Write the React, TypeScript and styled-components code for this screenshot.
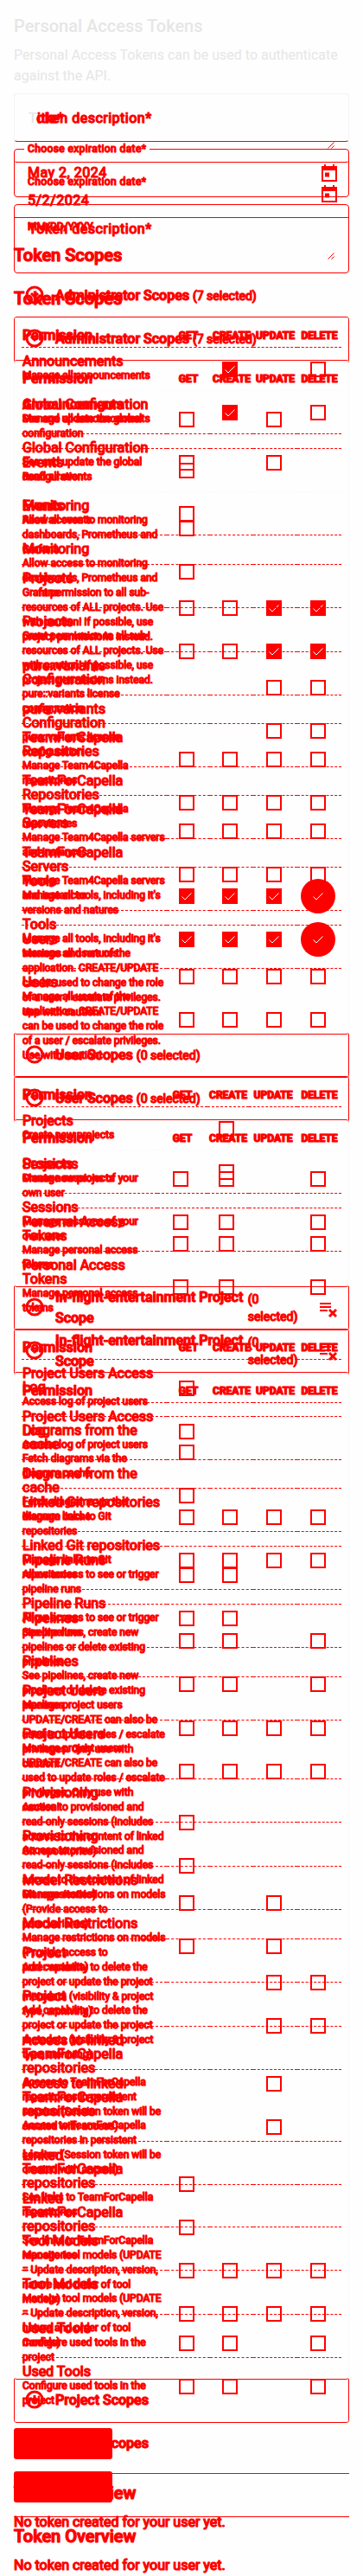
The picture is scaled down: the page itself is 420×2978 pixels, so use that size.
import React, { useId } from "react";
import styled, { createGlobalStyle } from "styled-components";

const RED = "#ff0000";
const FAINT = "#e6e6e6";
const PAPER = "#fefefe";

const GlobalStyle = createGlobalStyle`
  *, *::before, *::after { box-sizing: border-box; }
  body { margin: 0; background: ${PAPER}; font-family: Roboto, "Liberation Sans", sans-serif; }
  h1, h2, p { margin: 0; }
`;

type Version = "before" | "after";
type Method = "GET" | "CREATE" | "UPDATE" | "DELETE";

const METHODS: Method[] = ["GET", "CREATE", "UPDATE", "DELETE"];

interface Permission {
  title: string;
  text: string;
  same?: string;
  allow: Method[];
  checked?: Method[];
  hovered?: Method;
}

const ADMIN: Permission[] = [
  { title: "Announcements", text: "Manage all announcements", allow: ["CREATE", "DELETE"], checked: ["CREATE"] },
  { title: "Global Configuration", text: "See and update the global configuration", allow: ["GET", "UPDATE"] },
  { title: "Events", text: "Read all events", allow: ["GET"] },
  { title: "Monitoring", text: "Allow access to monitoring dashboards, Prometheus and Grafana", allow: ["GET"] },
  {
    title: "Projects",
    same: "Gra",
    text: "nt permission to all sub-resources of ALL projects. Use with caution! If possible, use project permissions instead.",
    allow: METHODS,
    checked: ["UPDATE", "DELETE"],
  },
  { title: "pure::variants Configuration", text: "pure::variants license configuration", allow: ["UPDATE", "DELETE"] },
  { title: "TeamForCapella Repositories", text: "Manage Team4Capella repositories", allow: METHODS },
  { title: "TeamForCapella Servers", text: "Manage Team4Capella servers and instances", allow: METHODS },
  {
    title: "Tools",
    text: "Manage all tools, including it's versions and natures",
    allow: METHODS,
    checked: METHODS,
    hovered: "DELETE",
  },
  {
    title: "Users",
    text: "Manage all users of the application. CREATE/UPDATE can be used to change the role of a user / escalate privileges. Use with caution!",
    allow: METHODS,
  },
];

const USER: Permission[] = [
  { title: "Projects", text: "Create new projects", allow: ["CREATE"] },
  { title: "Sessions", text: "Manage sessions of your own user", allow: ["GET", "CREATE", "DELETE"] },
  { title: "Personal Access Tokens", text: "Manage personal access tokens", allow: ["GET", "CREATE", "DELETE"] },
];

const PROJECT: Permission[] = [
  { title: "Project Users Access Log", text: "Access log of project users", allow: ["GET"] },
  { title: "Diagrams from the cache", text: "Fetch diagrams via the diagram cache", allow: ["GET"] },
  { title: "Linked Git repositories", text: "Manage links to Git\nrepositories", allow: METHODS },
  { title: "Pipeline Runs", text: "Allow access to see or trigger pipeline runs", allow: ["GET", "CREATE"] },
  {
    title: "Pipelines",
    text: "See pipelines, create new pipelines or delete existing pipelines",
    allow: ["GET", "CREATE", "DELETE"],
  },
  {
    title: "Project Users",
    text: "Manage project users UPDATE/CREATE can also be used to update roles / escalate privileges. Only use with\ncaution!",
    allow: METHODS,
  },
  {
    title: "Provisioning",
    text: "Access to provisioned and read-only sessions (includes access to the content of linked Git repositories)",
    allow: ["GET"],
  },
  {
    title: "Model Restrictions",
    text: "Manage restrictions on models (Provide access to pure::variants)",
    allow: ["GET", "UPDATE"],
  },
  {
    title: "Project",
    text: "Add capability to delete the project or update the project metadata (visibility & project type, archiving)",
    allow: ["UPDATE", "DELETE"],
  },
  {
    title: "Access to linked TeamForCapella repositories",
    text: "Access to TeamForCapella repositories in persistent session (Session token will be created with access)",
    allow: ["UPDATE"],
  },
  {
    title: "Linked\nTeamForCapella repositories",
    text: "See links to TeamForCapella repositories",
    allow: ["GET"],
  },
  {
    title: "Tool Models",
    text: "Manage tool models (UPDATE = Update description, version, nature and order of tool models)",
    allow: METHODS,
  },
  { title: "Used Tools", text: "Configure used tools in the project", allow: ["GET", "CREATE", "DELETE"] },
];

/* Both versions share one grid cell, so the later one lies over the earlier. */
const Comparison = styled.main`
  display: grid;
  grid-template-columns: minmax(0, 1fr);
  align-items: start;
  color: ${RED};
`;

const Layer = styled.div`
  grid-area: 1 / 1;
  padding: 16px 16px 0;
  -webkit-text-stroke: 1px currentColor;
  text-shadow: 0 0 1px currentColor, 0 0 1px currentColor;
`;

const Intro = styled.header<{ $hidden: boolean }>`
  display: flex;
  flex-direction: column;
  gap: 8px;
  margin-bottom: 8px;
  color: ${FAINT};
  -webkit-text-stroke: 0;
  text-shadow: none;
  visibility: ${(p) => (p.$hidden ? "hidden" : "visible")};
`;

const PageTitle = styled.h1`
  font-size: 20px;
  line-height: 28px;
  font-weight: 500;
`;

const Lead = styled.p`
  font-size: 16px;
  line-height: 24px;
`;

const Same = styled.span`
  color: ${FAINT};
  -webkit-text-stroke: 0;
  text-shadow: none;
`;

const Fields = styled.div<{ $after: boolean }>`
  display: flex;
  flex-direction: column;
  gap: 8px;
  padding-bottom: ${(p) => (p.$after ? 7 : 0)}px;
`;

const Field = styled.div<{ $side: string; $top: string; $height: number }>`
  position: relative;
  display: flex;
  align-items: center;
  height: ${(p) => p.$height}px;
  border: 1px solid ${(p) => p.$side};
  border-top-color: ${(p) => p.$top};
  border-bottom-color: ${RED};
  border-radius: 4px;
`;

const Underlined = styled.div`
  position: relative;
  display: flex;
  align-items: flex-end;
  height: 56px;
  padding: 0 1px 7px;
  border-bottom: 1px solid ${RED};
`;

const Control = styled.input`
  flex: 1;
  min-width: 0;
  height: 24px;
  padding: 0 15px;
  border: 0;
  outline: 0;
  background: transparent;
  color: ${RED};
  font: 400 16px/24px Roboto, sans-serif;
  letter-spacing: 0.5px;
  -webkit-text-stroke: 1px ${RED};
  text-shadow: 0 0 1px ${RED};
`;

const Area = styled(Control).attrs({ as: "textarea" })`
  align-self: stretch;
  height: auto;
  resize: none;
`;

const Label = styled.label`
  position: absolute;
  left: 16px;
  top: 16px;
  font-size: 16px;
  line-height: 24px;
  letter-spacing: 0.5px;
`;

const SmallLabel = styled.label<{ $outlined: boolean }>`
  position: absolute;
  left: ${(p) => (p.$outlined ? 11 : 12)}px;
  top: ${(p) => (p.$outlined ? -9 : 6)}px;
  padding: 0 4px;
  background: ${(p) => (p.$outlined ? PAPER : "transparent")};
  font-size: 12px;
  line-height: 16px;
  letter-spacing: 0.4px;
`;

const IconButton = styled.button<{ $inset: number }>`
  display: grid;
  flex: none;
  place-items: center;
  width: 24px;
  height: 24px;
  margin: 0 ${(p) => p.$inset}px 0 0;
  padding: 0;
  border: 0;
  background: none;
  color: ${RED};
`;

const DateDock = styled.div`
  display: flex;
  align-self: center;
  padding-top: 7px;
`;

const Hint = styled.p`
  margin-top: -8px;
  padding-left: 16px;
  font-size: 12px;
  line-height: 21px;
`;

const Grip = styled.svg`
  position: absolute;
  right: 16px;
  bottom: 15px;
`;

const Heading = styled.h2`
  margin: 8px 0;
  font-size: 20px;
  line-height: 28px;
  font-weight: 500;
`;

const ScopeHeading = styled(Heading)`
  margin-bottom: 9px;
`;

const PanelHeader = styled.div`
  display: flex;
  align-items: center;
  gap: 12px;
  min-height: 48px;
  padding: 0 11px 0 12px;
`;

const PanelIcon = styled.svg`
  flex: none;
  width: 24px;
  height: 24px;
`;

const PanelName = styled.div<{ $wide: boolean }>`
  display: flex;
  flex: 1;
  align-items: center;
  gap: ${(p) => (p.$wide ? 0 : 4)}px;
`;

const PanelTitle = styled.span<{ $wide: boolean }>`
  flex: none;
  width: ${(p) => (p.$wide ? "76%" : "auto")};
  font-size: 16px;
  line-height: 24px;
  font-weight: 500;
`;

const PanelCount = styled.span`
  font-size: 14px;
  line-height: 20px;
`;

/* Side rules show in red only over the 50px that the other version lacks. */
const Card = styled.section<{ $edge: "top" | "bottom" }>`
  padding: 8px 9px;
  border: solid ${RED};
  border-width: 1px 0;
  border-radius: 4px;
  background:
    linear-gradient(${RED}, ${RED}) left ${(p) => p.$edge} / 1px 50px no-repeat,
    linear-gradient(${RED}, ${RED}) right ${(p) => p.$edge} / 1px 50px no-repeat,
    linear-gradient(#fafafa, #fafafa) left top / 1px 100% no-repeat,
    linear-gradient(#fafafa, #fafafa) right top / 1px 100% no-repeat;
`;

const Table = styled.table`
  width: 100%;
  table-layout: fixed;
  border-collapse: separate;
  border-spacing: 0;
`;

const Column = styled.col<{ $width: number }>`
  width: ${(p) => p.$width}px;
`;

const Row = styled.tr<{ $faint: boolean }>`
  & > * { border-bottom: 1px dashed ${(p) => (p.$faint ? "#fafafa" : RED)}; }
  &:last-child > td { border-bottom: 0; }
`;

const HeadRow = styled.tr<{ $faint: boolean }>`
  & > * { border-bottom: 1px dashed ${(p) => (p.$faint ? "#fafafa" : RED)}; }
`;

const NameHead = styled.th`
  height: 27px;
  padding: 0 1px;
  font-size: 16px;
  line-height: 24px;
  font-weight: 500;
  text-align: left;
`;

const MethodHead = styled.th`
  padding: 0;
  font-size: 12px;
  line-height: 24px;
  font-weight: 700;
  text-align: center;
`;

const NameCell = styled.td`
  padding: 8px 1px;
`;

const PermissionTitle = styled.div`
  font-size: 16px;
  line-height: 16px;
  white-space: pre-line;
`;

const PermissionText = styled.div`
  font-size: 12px;
  line-height: 17px;
  white-space: pre-line;
`;

const TickCell = styled.td`
  padding: 0 4px 0 0;
  vertical-align: middle;
`;

const TickBox = styled.span<{ $hovered: boolean }>`
  display: grid;
  place-items: center;
  width: 40px;
  height: 40px;
  margin: 0 auto;
  border-radius: 50%;
  background: ${(p) => (p.$hovered ? RED : "transparent")};
`;

const Tick = styled.input.attrs({ type: "checkbox" })`
  grid-area: 1 / 1;
  appearance: none;
  width: 18px;
  height: 18px;
  margin: 0;
  border: 2px solid ${RED};
  &:checked { background: ${RED}; }
`;

const TickMark = styled.svg`
  grid-area: 1 / 1;
  pointer-events: none;
`;

const Submit = styled.button`
  display: block;
  width: 114px;
  height: 36px;
  margin: 8px 0 16px;
  border: 0;
  border-radius: 3px;
  background: ${RED};
  color: ${RED};
  font: 500 14px/20px Roboto, sans-serif;
`;

const Divider = styled.hr`
  height: 1px;
  margin: 0;
  border: 0;
  background: ${RED};
`;

function DateButton() {
  return (
    <IconButton $inset={10} type="button" aria-label="Open calendar">
      <svg width="24" height="24" viewBox="0 0 24 24" fill="currentColor" aria-hidden="true">
        <path d="M6 2h2v2h8V2h2v2h3v18H3V4h3zM5 9v11h14V9zM7 11.500h5v5H7z" fillRule="evenodd" />
      </svg>
    </IconButton>
  );
}

function ResizeGrip() {
  return (
    <Grip width="8" height="8" viewBox="0 0 8 8" stroke={RED} aria-hidden="true">
      <path d="M0.500 7.500l7-7M4.500 7.500l3-3" />
    </Grip>
  );
}

function DescriptionField({ after }: { after: boolean }) {
  const id = useId();
  return (
    <Field $height={80} $side={after ? RED : "#f3f3f3"} $top={after ? RED : "#f3f3f3"}>
      <Area id={id} />
      <Label htmlFor={id}>
        {after ? "T" : <Same>T</Same>}oken description*
      </Label>
      <ResizeGrip />
    </Field>
  );
}

function TokenForm({ version }: { version: Version }) {
  const titleId = useId();
  const dateId = useId();
  if (version === "before") {
    return (
      <Fields $after={false}>
        <DescriptionField after={false} />
        <Underlined>
          <SmallLabel $outlined={false} htmlFor={dateId}>Choose expiration date*</SmallLabel>
          <Control id={dateId} defaultValue="5/2/2024" />
          <DateDock><DateButton /></DateDock>
        </Underlined>
        <Hint>MM/DD/YYYY</Hint>
      </Fields>
    );
  }
  return (
    <Fields $after>
      <Field $height={56} $side="#f3f3f3" $top="#f3f3f3">
        <Control id={titleId} />
        <Label htmlFor={titleId}>
          <Same>T</Same>itle*
        </Label>
      </Field>
      <Field $height={56} $side={RED} $top={RED}>
        <SmallLabel $outlined htmlFor={dateId}>Choose expiration date*</SmallLabel>
        <Control id={dateId} defaultValue="May 2, 2024" />
        <DateButton />
      </Field>
      <DescriptionField after />
    </Fields>
  );
}

interface PanelHeadProps {
  title: string;
  count?: string;
  kind?: "expand" | "add";
  removable?: boolean;
}

function PanelHead({ title, count, kind = "expand", removable = false }: PanelHeadProps) {
  return (
    <PanelHeader>
      <PanelIcon viewBox="0 0 24 24" fill="none" stroke={RED} strokeWidth="3" aria-hidden="true">
        <circle cx="12" cy="11" r="9" />
        <path d={kind === "add" ? "M12 6v10M7 11h10" : "M8 9l4 4 4-4"} />
      </PanelIcon>
      <PanelName $wide={removable}>
        <PanelTitle $wide={removable}>{title}</PanelTitle>
        {count && <PanelCount>({count} selected)</PanelCount>}
      </PanelName>
      {removable && (
        <IconButton $inset={0} type="button" aria-label="Remove scope">
          <svg width="24" height="24" viewBox="0 0 24 24" stroke={RED} fill="none" strokeWidth="2" aria-hidden="true">
            <path d="M1 7h13M1 11h13M1 15h9" />
            <path d="M12 14l8 8M20 14l-8 8" strokeWidth="3" />
          </svg>
        </IconButton>
      )}
    </PanelHeader>
  );
}

interface ScopeTableProps {
  version: Version;
  rows: Permission[];
  widths: number[];
  faintRows?: string[];
  faintHead?: boolean;
}

function ScopeTable({ version, rows, widths, faintRows = [], faintHead = false }: ScopeTableProps) {
  return (
    <Card $edge={version === "before" ? "top" : "bottom"}>
      <Table>
        <colgroup>
          <col />
          {widths.map((w, i) => (
            <Column key={METHODS[i]} $width={w} />
          ))}
        </colgroup>
        <thead>
          <HeadRow $faint={faintHead}>
            <NameHead scope="col">Permission</NameHead>
            {METHODS.map((m) => (
              <MethodHead key={m} scope="col">{m}</MethodHead>
            ))}
          </HeadRow>
        </thead>
        <tbody>
          {rows.map((row) => (
            <Row key={row.title} $faint={faintRows.includes(row.title)}>
              <NameCell>
                <PermissionTitle>{row.title}</PermissionTitle>
                <PermissionText>
                  {row.same && (version === "before" ? <Same>{row.same}</Same> : row.same)}
                  {row.text}
                </PermissionText>
              </NameCell>
              {METHODS.map((m) => (
                <TickCell key={m}>
                  {row.allow.includes(m) && (
                    <TickBox $hovered={row.hovered === m}>
                      <Tick defaultChecked={row.checked?.includes(m)} aria-label={`${row.title}: ${m}`} />
                      {row.checked?.includes(m) && (
                        <TickMark width="18" height="18" viewBox="0 0 18 18" fill="none" stroke="#fff" aria-hidden="true">
                          <path d="M3.500 9.500l3.500 3.500 7.500-7.500" />
                        </TickMark>
                      )}
                    </TickBox>
                  )}
                </TickCell>
              ))}
            </Row>
          ))}
        </tbody>
      </Table>
    </Card>
  );
}

const SCOPE_WIDTHS = [50, 50, 51, 51];
const USER_WIDTHS = [58, 48, 56, 51];

function TokenPage({ version }: { version: Version }) {
  const after = version === "after";
  return (
    <Layer>
      <Intro $hidden={after}>
        <PageTitle>Personal Access Tokens</PageTitle>
        <Lead>Personal Access Tokens can be used to authenticate against the API.</Lead>
      </Intro>
      <TokenForm version={version} />
      <ScopeHeading>Token Scopes</ScopeHeading>
      <PanelHead title="Administrator Scopes" count="7" />
      <ScopeTable
        version={version}
        rows={ADMIN}
        widths={SCOPE_WIDTHS}
        faintHead={after}
        faintRows={after ? ["Global Configuration"] : ["Announcements", "Events"]}
      />
      <PanelHead title="User Scopes" count="0" />
      <ScopeTable
        version={version}
        rows={USER}
        widths={USER_WIDTHS}
        faintHead={after}
        faintRows={after ? [] : ["Projects"]}
      />
      <PanelHead title="In-flight-entertainment Project Scope" count="0" removable />
      <ScopeTable version={version} rows={PROJECT} widths={SCOPE_WIDTHS} />
      <PanelHead title="Project Scopes" kind="add" />
      <Submit type="submit">Create token</Submit>
      <Divider />
      <Heading>Token Overview</Heading>
      <Lead>No token created for your user yet.</Lead>
    </Layer>
  );
}

export default function App() {
  return (
    <>
      <GlobalStyle />
      <Comparison>
        <TokenPage version="before" />
        <TokenPage version="after" />
      </Comparison>
    </>
  );
}
